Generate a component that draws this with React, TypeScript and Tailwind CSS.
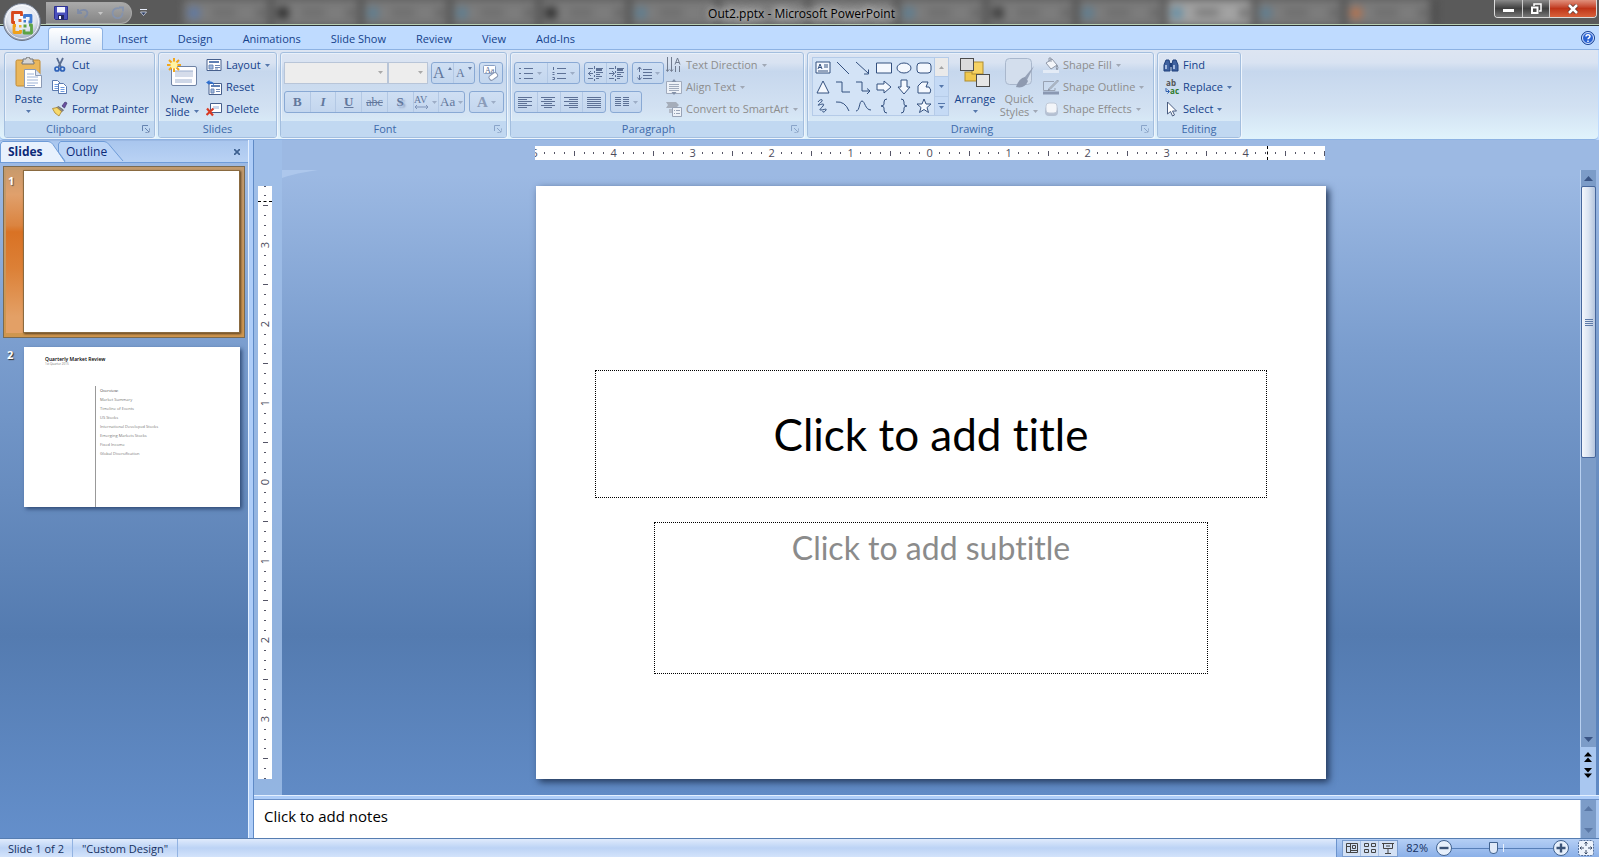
import React from 'react';

type IconProps = { children: React.ReactNode; size?: string; box?: string };

const Icon: React.FC<IconProps> = ({ children, size = 'w-4 h-4', box = '0 0 16 16' }) => (
  <svg viewBox={box} className={`${size} shrink-0`} fill="none" aria-hidden="true">
    {children}
  </svg>
);

const Caret: React.FC<{ className?: string }> = ({ className = 'text-[#5577ab]' }) => (
  <svg viewBox="0 0 5 3" className={`w-[5px] h-[3px] shrink-0 ${className}`} aria-hidden="true">
    <path d="M0 0h5L2.5 3z" fill="currentColor" />
  </svg>
);

/* ---------- title bar ---------- */

const browserTabs = [
  'bg-[#5b78a8]', 'bg-[#222]', 'bg-[#5b7d92]', 'bg-[#5b7d92]', 'bg-[#222]', 'bg-[#5b7d92]', 'bg-[#777]',
  'bg-[#777]', 'bg-[#5b7d92]', 'bg-[#333]', 'bg-[#5b7d92]', 'bg-[#5f8da5]', 'bg-[#5b7d92]', 'bg-[#b9714a]',
];

const OfficeOrb = () => (
  <svg viewBox="0 0 40 40" className="w-10 h-10" aria-hidden="true">
    <defs>
      <radialGradient id="orb" cx="50%" cy="35%" r="65%">
        <stop offset="0" stopColor="#ffffff" />
        <stop offset="0.6" stopColor="#dfe4ee" />
        <stop offset="1" stopColor="#8e9bb5" />
      </radialGradient>
    </defs>
    <circle cx="20" cy="20" r="18.5" fill="url(#orb)" stroke="#6b7483" />
    <circle cx="20" cy="20" r="16.5" fill="none" stroke="#fff" strokeOpacity=".8" />
    <g fill="none" strokeWidth="2.8" strokeLinejoin="round">
      <path d="M13 20.500h-2.500V10.500H19.500V14" stroke="#d8481c" />
      <path d="M22.500 16.500v-3H29V20H26.500" stroke="#3f79d0" />
      <path d="M14 23.500h-2V30.500H18.500V28" stroke="#f0a11c" />
      <path d="M22 27.500v3.500H29.500V23H27" stroke="#5da345" />
    </g>
    <rect x="16.500" y="17" width="3" height="3" fill="#e2703a" />
    <rect x="21.500" y="18" width="2.500" height="2.500" fill="#3f79d0" />
    <rect x="17" y="23" width="2.500" height="2.500" fill="#f3b52e" />
    <rect x="21.500" y="22.500" width="3" height="3" fill="#5da345" />
  </svg>
);

const TitleBar = () => (
  <header className="relative h-[26px] bg-[#5a5a5a] border-b border-[#2c3338] flex items-start">
    <div className="absolute inset-0 overflow-hidden">
      <div className="flex h-full pl-[184px] pr-[164px] blur-[4px]">
        {browserTabs.map((c, i) => (
          <div key={i} className={`flex-1 flex items-center gap-3 px-1 border-r-4 border-[#3a3a3a] ${i === 11 ? 'bg-[#a2a2a2]' : 'bg-[#7c7c7c]'}`}>
            <span className={`w-3 h-3 rounded-full ${c}`} />
            <span className="w-6 h-[5px] bg-[#666]" />
            <span className="w-2 h-2 bg-[#606060] ml-auto" />
          </div>
        ))}
      </div>
      <div className="absolute inset-x-0 bottom-0 h-px bg-[#b9cfb4]" />
    </div>
    <div className="relative w-[86px] h-[22px] mt-[2px] ml-[46px] pl-2 rounded-r-full border border-l-0 border-[#a8a8a8] bg-gradient-to-b from-[#a9a9a9] to-[#858585] flex items-center gap-2">
      <button aria-label="Save">
        <Icon size="w-[14px] h-[14px]" box="0 0 14 14">
          <path d="M.5.500h13v13h-12l-1-1z" fill="#4a50bd" stroke="#2c3190" />
          <path d="M3 1h8v5.500H3z" fill="#f3f5ff" />
          <path d="M4 9h6v4.500H4z" fill="#23275f" />
          <path d="M5 10h2v3H5z" fill="#fff" />
        </Icon>
      </button>
      <button aria-label="Undo" disabled>
        <Icon size="w-[14px] h-[14px]" box="0 0 14 14">
          <path d="M2 3v4h4M2.500 6.500C5 3 11 3 11.500 7c0 2-1 3-3 4.500" stroke="#7e8ba6" strokeWidth="1.800" />
        </Icon>
      </button>
      <Caret className="text-[#c6c6c6]" />
      <button aria-label="Redo" disabled>
        <Icon size="w-[14px] h-[14px]" box="0 0 14 14">
          <path d="M11.500 6.500a5 5 0 1 1-3-4M8 1.500h4v4" stroke="#8593ad" strokeWidth="1.800" />
        </Icon>
      </button>
    </div>
    <button aria-label="Customize" className="relative mt-[9px] ml-2">
      <Icon size="w-[7px] h-[7px]" box="0 0 7 7">
        <path d="M0 .500h7" stroke="#e8eefc" />
        <path d="M.500 3h6L3.500 6.500z" fill="#2c3c60" stroke="#e8eefc" strokeWidth=".7" />
      </Icon>
    </button>
    <h1 className="relative flex-1 text-center text-[12px] leading-[28px] pl-4 text-black [text-shadow:0_0_6px_#ddd,0_0_10px_#ccc,0_0_14px_#ccc]">
      Out2.pptx - Microsoft PowerPoint
    </h1>
    <div className="relative flex h-[18px] mr-[2px] ml-[54px] rounded-b border border-t-0 border-[#dcdcdc] overflow-hidden">
      <button aria-label="Minimize" className="w-7 flex items-center justify-center bg-gradient-to-b from-[#8a8a8a] via-[#3f3f3f] to-[#777] border-r border-[#ccc]">
        <span className="w-[11px] h-[3px] bg-white mt-1" />
      </button>
      <button aria-label="Restore" className="w-[27px] flex items-center justify-center bg-gradient-to-b from-[#8a8a8a] via-[#3f3f3f] to-[#777] border-r border-[#ccc]">
        <Icon size="w-3 h-3" box="0 0 12 12">
          <path d="M4 3V1h7v7H9" stroke="#fff" strokeWidth="1.500" />
          <path d="M2 4.500h5.500V10H2z" stroke="#fff" strokeWidth="2" />
        </Icon>
      </button>
      <button aria-label="Close" className="w-[46px] flex items-center justify-center bg-gradient-to-b from-[#e0907c] via-[#bf3418] to-[#d9603a]">
        <Icon size="w-3 h-[10px]" box="0 0 12 10">
          <path d="M2 1l8 8M10 1L2 9" stroke="#54302a" strokeWidth="4" />
          <path d="M2 1l8 8M10 1L2 9" stroke="#fff" strokeWidth="2.600" />
        </Icon>
      </button>
    </div>
    <button aria-label="Office Button" className="absolute left-[2px] top-[2px] z-10">
      <OfficeOrb />
    </button>
  </header>
);

/* ---------- ribbon ---------- */

const ribbonTabs = ['Insert', 'Design', 'Animations', 'Slide Show', 'Review', 'View', 'Add-Ins'];

const RibbonTabs = () => (
  <nav className="flex items-end h-6 pl-12 pr-1 bg-[#bfdbff] border-b border-[#8db2e3] text-[11px] text-[#15428b]">
    <button className="h-[23px] px-[11px] pt-[2px] -mb-px rounded-t border border-b-0 border-[#8db2e3] bg-gradient-to-b from-white to-[#dde8f6]">Home</button>
    {ribbonTabs.map((t) => (
      <button key={t} className="h-[22px] px-[15px] pt-[2px]">{t}</button>
    ))}
    <button aria-label="Help" className="ml-auto self-center">
      <Icon size="w-[14px] h-[14px]" box="0 0 14 14">
        <circle cx="7" cy="7" r="6.500" fill="#2a62d2" stroke="#1e448f" />
        <circle cx="7" cy="7" r="5.500" stroke="#d7e6ff" />
        <path d="M5 5.500c0-2.500 4-2.500 4 0 0 1.300-2 1.300-2 2.800M7 9.500V11" stroke="#fff" strokeWidth="1.500" />
      </Icon>
    </button>
  </nav>
);

const Launcher: React.FC<{ dim?: boolean }> = ({ dim }) => (
  <button aria-label="More options" className={`absolute right-1 top-1 ${dim ? 'opacity-60' : ''}`}>
    <Icon size="w-2 h-2" box="0 0 8 8">
      <path d="M.500 6V.500H6" stroke="#6583b0" />
      <path d="M3 3l4 4M7.500 3.500v4h-4" stroke="#6583b0" />
      <path d="M8 4.500V8H4.500" stroke="#fff" strokeOpacity=".6" />
    </Icon>
  </button>
);

const Group: React.FC<{ label: string; width: string; launcher?: boolean; dim?: boolean; children: React.ReactNode }> = ({ label, width, launcher, dim, children }) => (
  <section className={`${width} shrink-0 flex flex-col rounded-[3px] border border-[#a3bede] shadow-[1px_1px_0_#eef5fd,inset_1px_1px_0_#e8f0fa] overflow-hidden`}>
    <div className="flex-1 flex items-start">{children}</div>
    <div className={`relative h-4 bg-[#c1d8f1] text-[11px] leading-4 text-center text-[#3e6aaa] ${launcher ? 'pr-[17px]' : ''}`}>
      {label}
      {launcher && <Launcher dim={dim} />}
    </div>
  </section>
);

const SmallButton: React.FC<{ icon: React.ReactNode; label: string; caret?: boolean; disabled?: boolean }> = ({ icon, label, caret, disabled }) => (
  <button disabled={disabled} className={`flex items-center gap-1 h-[22px] whitespace-nowrap ${disabled ? 'text-[#8d8d8d]' : 'text-[#15428b]'}`}>
    {icon}
    <span>{label}</span>
    {caret && <Caret className={disabled ? 'text-[#a0a8b5]' : 'text-[#5577ab]'} />}
  </button>
);

const page = (x: number, y: number) => (
  <>
    <path d={`M${x} ${y}h5l3 3v7h-8z`} fill="#fff" stroke="#5a79ae" />
    <path d={`M${x + 2} ${y + 4}h4M${x + 2} ${y + 6}h4M${x + 2} ${y + 8}h4`} stroke="#6e9be0" />
  </>
);

const Clipboard = () => (
  <Group label="Clipboard" width="w-[151px]" launcher>
    <button className="w-[47px] pt-1 flex flex-col items-center">
      <Icon size="w-7 h-8" box="0 0 28 32">
        <rect x="1" y="3" width="24" height="26" rx="1.500" fill="#eab75c" stroke="#c08a35" />
        <path d="M8 5V2h3a2 2 0 0 1 4 0h3v3h1v2H7V5z" fill="#d5d5d5" stroke="#777" />
        <path d="M9.500 12.500h11l6 6v12h-17z" fill="#fff" stroke="#8b9ab5" />
        <path d="M20.500 12.500v6h6" fill="#dbe3f0" stroke="#8b9ab5" />
        <path d="M12 17h7M12 20h11M12 23h11M12 26h11M12 28.500h8" stroke="#9db2d6" />
      </Icon>
      <span className="leading-[18px] pt-px">Paste</span>
      <span className="pt-[2px]"><Caret /></span>
    </button>
    <div className="flex flex-col pt-px">
      <SmallButton label="Cut" icon={
        <Icon><path d="M5 1l4 9M11 1L6.500 10" stroke="#5a6d90" strokeWidth="1.800" /><circle cx="5" cy="12" r="2" stroke="#2f62b8" strokeWidth="1.700" /><circle cx="10.500" cy="12" r="2" stroke="#2f62b8" strokeWidth="1.700" /></Icon>} />
      <SmallButton label="Copy" icon={<Icon>{page(0.5, 1.5)}{page(6.5, 4.5)}</Icon>} />
      <SmallButton label="Format Painter" icon={
        <Icon>
          <path d="M10 5l3-4 2 1-2.500 5z" fill="#6b4fa0" stroke="#40356e" strokeWidth=".7" />
          <path d="M6.500 5.500l5 3.500-2 2-5.500-4z" fill="#8a8a8a" stroke="#555" strokeWidth=".7" />
          <path d="M.500 7.500L5 6.500l4.500 4L7 15 3 12z" fill="#f7d96b" stroke="#a98430" strokeWidth=".8" />
        </Icon>} />
    </div>
  </Group>
);

const Slides = () => (
  <Group label="Slides" width="w-[119px]">
    <button className="w-[46px] pt-1 flex flex-col items-center leading-[13px]">
      <Icon size="w-8 h-8" box="0 0 32 32">
        <rect x="5.500" y="9.500" width="25" height="19" rx="1.500" fill="#fdfdff" stroke="#6f83a5" />
        <path d="M9 14h18v6H9z" fill="#d5dcea" />
        <path d="M9 14h18M9 23h17M9 25h17" stroke="#9eb0cf" />
        <path d="M8 1v14M1 8h14M3 3l10 10M13 3L3 13" stroke="#f2a71b" strokeWidth="2" />
        <circle cx="8" cy="8" r="3.500" fill="#fff3a0" />
      </Icon>
      <span className="pt-[3px]">New</span>
      <span className="flex items-center gap-1">Slide <Caret /></span>
    </button>
    <div className="flex flex-col pt-px pl-px">
      <SmallButton label="Layout" caret icon={
        <Icon><path d="M1 2.500h14v11H1z" fill="#fff" stroke="#465f8c" /><path d="M3 5h10" stroke="#5f7fb2" strokeWidth="2" /><path d="M3 8h4v4H3z" fill="#9fb8de" stroke="#6d88b5" /><path d="M9 8.500h5M9 10.500h5M9 12h3" stroke="#6d88b5" /></Icon>} />
      <SmallButton label="Reset" icon={
        <Icon><path d="M3 4.500h12.500v11H3z" fill="#fff" stroke="#465f8c" /><path d="M5 7h9" stroke="#5f7fb2" strokeWidth="2" /><path d="M5 10h3v4H5z" fill="#9fb8de" stroke="#6d88b5" /><path d="M10 10.500h4M10 12.500h4" stroke="#6d88b5" /><path d="M3.500 1L0 3.500 3.500 6V4.500c3 0 4 0 4 3 1.500-3.500-.5-5-4-5z" fill="#2f70cf" /></Icon>} />
      <SmallButton label="Delete" icon={
        <Icon><path d="M4.500 2.500h11v9h-11z" fill="#fff" stroke="#465f8c" /><path d="M7 5h6v3H7z" fill="#c9d6ec" /><path d="M1 7.500l6 7M7.500 7.500L.500 14" stroke="#d83a24" strokeWidth="2.200" /></Icon>} />
    </div>
  </Group>
);

const Strip: React.FC<{ width: string; children: React.ReactNode }> = ({ width, children }) => (
  <div className={`${width} h-[22px] flex items-center justify-around rounded-[3px] border border-[#89a9d4] bg-gradient-to-b from-[#cfdff3] to-[#c3d6ee] text-[#62779c] divide-x divide-[#b3c8e4]`}>
    {children}
  </div>
);

const Cell: React.FC<{ name: string; caret?: boolean; children: React.ReactNode }> = ({ name, caret, children }) => (
  <button disabled aria-label={name} className="flex-1 h-full flex items-center justify-center gap-[3px]">
    {children}
    {caret && <Caret className="text-[#9dadc6]" />}
  </button>
);

const serif = "font-['Liberation_Serif',serif] font-bold";

const FontGroup = () => (
  <Group label="Font" width="w-[227px]" launcher dim>
    <div className="flex flex-col gap-[7px] pt-[9px] pl-[3px]">
      <div className="flex h-[22px]">
        {[['Font', 'w-[104px]'], ['Font Size', 'w-10']].map(([name, w]) => (
          <div key={name} className={`${w} relative`}>
            <select disabled aria-label={name} className="w-full h-full appearance-none bg-[#ededed] border border-[#b8c5d8] opacity-100">
              <option></option>
            </select>
            <span className="absolute right-[5px] top-[9px] flex"><Caret className="text-[#a9a9a9]" /></span>
          </div>
        ))}
        <div className="flex gap-1 pl-[3px]">
          <Strip width="w-11">
            <Cell name="Grow Font">
              <span className="font-['Liberation_Serif',serif] text-[16px]">A</span>
              <Icon size="w-1 h-3" box="0 0 4 12"><path d="M0 3h4L2 0z" fill="#62779c" /></Icon>
            </Cell>
            <Cell name="Shrink Font">
              <span className="font-['Liberation_Serif',serif] text-[12px]">A</span>
              <Icon size="w-1 h-3" box="0 0 4 12"><path d="M0 0h4L2 3z" fill="#62779c" /></Icon>
            </Cell>
          </Strip>
          <Strip width="w-6">
            <Cell name="Clear Formatting">
              <Icon>
                <rect x=".500" y=".500" width="12" height="8" rx="1" fill="#fff" stroke="#8aa0c4" />
                <text x="2" y="7.500" fontSize="8" fill="#51658c" fontFamily="Liberation Serif, serif">Aa</text>
                <rect x="5.500" y="9" width="9" height="5" rx="2" transform="rotate(-35 10 11)" fill="#fff" stroke="#8795b0" />
              </Icon>
            </Cell>
          </Strip>
        </div>
      </div>
      <div className="flex gap-1">
        <Strip width="w-[181px]">
          <Cell name="Bold"><span className={`${serif} text-[13px]`}>B</span></Cell>
          <Cell name="Italic"><span className={`${serif} text-[13px] italic`}>I</span></Cell>
          <Cell name="Underline"><span className={`${serif} text-[13px] underline`}>U</span></Cell>
          <Cell name="Strikethrough"><span className="font-['Liberation_Serif',serif] text-[12px] line-through">abc</span></Cell>
          <Cell name="Shadow"><span className={`${serif} text-[13px] [text-shadow:2px_2px_2px_#8a9cc0]`}>S</span></Cell>
          <Cell name="Character Spacing" caret>
            <Icon box="0 0 15 16" size="w-[15px] h-4">
              <text x="0" y="9" fontSize="10" fill="#62779c" fontFamily="Liberation Serif, serif">AV</text>
              <path d="M1 13h13M3 11l-2 2 2 2M12 11l2 2-2 2" stroke="#7f93b8" />
            </Icon>
          </Cell>
          <Cell name="Change Case" caret><span className="font-['Liberation_Serif',serif] text-[13px]">Aa</span></Cell>
        </Strip>
        <Strip width="w-[35px]">
          <Cell name="Font Color" caret><span className={`${serif} text-[15px] text-[#8b9cb9]`}>A</span></Cell>
        </Strip>
      </div>
    </div>
  </Group>
);

const ink = '#5d7196';

const lineIcons: Record<string, string> = {
  left: 'M0 2.500h14M0 4.500h9M0 6.500h14M0 8.500h9M0 10.500h14M0 12.500h9',
  center: 'M0 2.500h14M3 4.500h8M0 6.500h14M3 8.500h8M0 10.500h14M3 12.500h8',
  right: 'M0 2.500h14M5 4.500h9M0 6.500h14M5 8.500h9M0 10.500h14M5 12.500h9',
  justify: 'M0 2.500h14M0 4.500h14M0 6.500h14M0 8.500h14M0 10.500h14M0 12.500h14',
  columns: 'M0 2.500h6M0 4.500h6M0 6.500h6M0 8.500h6M0 10.500h6M8 2.500h6M8 4.500h6M8 6.500h6M8 8.500h6M8 10.500h6',
  bullets: 'M5 2.500h9M5 7.500h9M5 12.500h9M0 2.500h2M0 7.500h2M0 12.500h2',
  numbers: 'M5 2.500h9M5 7.500h9M5 12.500h9M1.500 1v3M.500 6.500h2M.500 8.500h2M.500 11.500h2v2h-2',
  outdent: 'M0 2.500h5M8 2.500h7M8 3.500h6M8 4.500h6M0 7.500h5M3 5L.500 7.500 3 10M8 6.500h7M8 8.500h4M0 12.500h5M8 10.500h6M8 12.500h3M6.500 0v3M6.500 5v2M6.500 9v2M6.500 13v2',
  indent: 'M0 2.500h5M8 2.500h7M8 3.500h6M8 4.500h6M0 7.500h5M3 5l2.500 2.500L3 10M8 6.500h7M8 8.500h4M0 12.500h5M8 10.500h6M8 12.500h3M6.500 0v3M6.500 5v2M6.500 9v2M6.500 13v2',
  spacing: 'M6 3.500h9M6 6.500h9M6 9.500h9M6 12.500h9M2.500 1v5M.500 3.500l2-2.500 2 2.500M2.500 9v5M.500 11.500l2 2.500 2-2.500',
};

const Lines: React.FC<{ kind: string }> = ({ kind }) => (
  <Icon size="w-[15px] h-[15px]" box="0 0 15 15"><path d={lineIcons[kind]} stroke={ink} /></Icon>
);

const Paragraph = () => (
  <Group label="Paragraph" width="w-[294px]" launcher dim>
    <div className="flex flex-col gap-[7px] pt-[9px] pl-[3px]">
      <div className="flex gap-1">
        <Strip width="w-[66px]">
          <Cell name="Bullets" caret><Lines kind="bullets" /></Cell>
          <Cell name="Numbering" caret><Lines kind="numbers" /></Cell>
        </Strip>
        <Strip width="w-[44px]">
          <Cell name="Decrease Indent"><Lines kind="outdent" /></Cell>
          <Cell name="Increase Indent"><Lines kind="indent" /></Cell>
        </Strip>
        <Strip width="w-8">
          <Cell name="Line Spacing" caret><Lines kind="spacing" /></Cell>
        </Strip>
      </div>
      <div className="flex gap-1">
        <Strip width="w-[92px]">
          {['left', 'center', 'right', 'justify'].map((k) => (
            <Cell key={k} name={k}><Lines kind={k} /></Cell>
          ))}
        </Strip>
        <Strip width="w-8">
          <Cell name="Columns" caret><Lines kind="columns" /></Cell>
        </Strip>
      </div>
    </div>
    <div className="flex flex-col pt-px pl-[2px]">
      <SmallButton disabled caret label="Text Direction" icon={
        <Icon><path d="M1.500 0v14M5.500 0v14M9.500 9v6M13.500 9v6M0 12.500l1.500 2 1.500-2M4 12.500l1.500 2 1.500-2" stroke="#707b8e" /><path d="M9 7.500L11.500 1 14 7.500M10 5.500h3" stroke="#707b8e" /></Icon>} />
      <SmallButton disabled caret label="Align Text" icon={
        <Icon><path d="M.500 2.500h15v12H.500z" fill="#eef2f8" stroke="#a1abbd" /><path d="M3 5.500h10M3 7.500h10M3 9.500h10M3 11.500h10" stroke="#a1abbd" /><path d="M5.500 3L8 0l2.500 3zM5.500 13L8 16l2.500-3z" fill="#8290a8" /></Icon>} />
      <SmallButton disabled caret label="Convert to SmartArt" icon={
        <Icon><path d="M0 1h10l3 3-3 3H0l2-3z" fill="#a5adba" /><path d="M3 8h4v4H3z" fill="#b5bcc8" /><path d="M6.500 6.500h9v9h-9z" fill="#eef2f8" stroke="#98a3b6" /><path d="M8 9.500h1M10 9.500h4M8 12.500h1M10 12.500h4" stroke="#98a3b6" /></Icon>} />
    </div>
  </Group>
);

const shapes: { name: string; d: string; fill?: boolean }[] = [
  { name: 'Text Box', d: 'M1 2h14v11H1zM3 9l2-5 2 5M4 7.500h2M9 5h4M9 7h4M3 11h10', fill: true },
  { name: 'Line', d: 'M2 2l12 12' },
  { name: 'Arrow', d: 'M1 2l12 11M13.500 9.500V14H9' },
  { name: 'Rectangle', d: 'M.500 3h15v10H.500z', fill: true },
  { name: 'Oval', d: 'M1 8a7 5 0 1 0 14 0a7 5 0 1 0-14 0', fill: true },
  { name: 'Rounded Rectangle', d: 'M4 3h8q3 0 3 3v4q0 3-3 3H4q-3 0-3-3V6q0-3 3-3z', fill: true },
  { name: 'Triangle', d: 'M8 2l6 12H2z', fill: true },
  { name: 'Elbow', d: 'M1 3h6v10h8' },
  { name: 'Elbow Arrow', d: 'M1 3h6v9h8M12 9.500l3 2.500-3 3' },
  { name: 'Right Arrow', d: 'M1 5h7V2l7 6-7 6v-3H1z', fill: true },
  { name: 'Down Arrow', d: 'M5 1h6v7h3l-6 7-6-7h3z', fill: true },
  { name: 'Freeform', d: 'M2 14V7l4-4h6l-2 5h3q3 3 1 6z', fill: true },
  { name: 'Scribble', d: 'M3 4c2-3 5-3 4-1S1 8 4 7s6-2 4 1-5 4-2 4 6-2 5 0-4 3-3 1' },
  { name: 'Arc', d: 'M1 4q9-1 13 9' },
  { name: 'Curve', d: 'M1 13C5 13 4 3 7 3s3 9 9 9' },
  { name: 'Left Brace', d: 'M11 1q-3 0-3 3v2q0 2-3 2 3 0 3 2v2q0 3 3 3' },
  { name: 'Right Brace', d: 'M5 1q3 0 3 3v2q0 2 3 2-3 0-3 2v2q0 3-3 3' },
  { name: 'Star', d: 'M8 1l2 5h5l-4 3.500 1.500 5L8 11.500l-4.500 3 1.500-5L1 6h5z', fill: true },
];

const Drawing = () => (
  <Group label="Drawing" width="w-[347px]" launcher dim>
    <div className="flex h-[59px] mt-1 ml-1 w-[137px] border border-[#b5cbe8] bg-[#d3e3f6]">
      <div className="flex-1 grid grid-cols-6 place-items-center">
        {shapes.map((s) => (
          <button key={s.name} aria-label={s.name}>
            <Icon><path d={s.d} stroke="#33507f" fill={s.fill ? '#f4f8fe' : 'none'} /></Icon>
          </button>
        ))}
      </div>
      <div className="w-[14px] flex flex-col border-l border-[#b5cbe8] divide-y divide-[#b5cbe8]">
        <button aria-label="Scroll up" className="flex-1 flex items-center justify-center bg-[#eaeaea]"><Icon size="w-[5px] h-[3px]" box="0 0 5 3"><path d="M0 3h5L2.500 0z" fill="#a5a5a5" /></Icon></button>
        <button aria-label="Scroll down" className="flex-1 flex items-center justify-center bg-[#c5daf5]"><Caret /></button>
        <button aria-label="More shapes" className="flex-1 flex flex-col gap-[2px] items-center justify-center bg-[#c5daf5]"><span className="w-[7px] h-px bg-[#5577ab]" /><Caret /></button>
      </div>
    </div>
    <button className="w-[52px] pt-1 flex flex-col items-center">
      <Icon size="w-8 h-8" box="0 0 32 32">
        <rect x="6" y="15" width="12" height="9" fill="#f0c84e" stroke="#b08d2e" />
        <rect x="13" y="5" width="11" height="12" fill="#f5d264" stroke="#b08d2e" />
        <rect x="1.500" y="1.500" width="13" height="12" fill="#dcdcdc" stroke="#4c4c4c" />
        <rect x="17.500" y="17.500" width="13" height="12" fill="#e6e6e6" stroke="#4c4c4c" />
      </Icon>
      <span className="leading-[18px] pt-px">Arrange</span>
      <span className="pt-[2px]"><Caret /></span>
    </button>
    <button disabled className="w-9 pt-1 flex flex-col items-center leading-[13px] text-[#8d8d8d]">
      <Icon size="w-8 h-8" box="0 0 32 32">
        <rect x="2.500" y="1.500" width="26" height="26" rx="4" fill="#d3deed" stroke="#a9b7cc" />
        <path d="M31 9L21 21l3 2z" fill="#96a2b8" />
        <path d="M22 20q-6 1-9 10 9 2 12-6z" fill="#8e9ab0" />
      </Icon>
      <span className="pt-[3px]">Quick</span>
      <span className="flex items-center gap-1">Styles <Caret className="text-[#a0a8b5]" /></span>
    </button>
    <div className="flex flex-col pt-px pl-[6px]">
      <SmallButton disabled caret label="Shape Fill" icon={
        <Icon><path d="M3 6l6-4 5 6-6 4z" fill="#f4f6fa" stroke="#8f98a8" /><path d="M8 5V1H6v4M14 8q2 3 0 5-1.500-2 0-5" stroke="#8f98a8" /><path d="M0 13h16v3H0z" fill="#e3ebf6" /></Icon>} />
      <SmallButton disabled caret label="Shape Outline" icon={
        <Icon><path d="M11 2.500H.500v9H12V9" stroke="#98a2b3" /><path d="M14.500 1L6 9.500l-1 2 2-1L15.500 2z" fill="#c4ccd9" stroke="#7d8797" strokeWidth=".7" /><path d="M0 12.500h16v3H0z" fill="#8a98b2" /></Icon>} />
      <SmallButton disabled caret label="Shape Effects" icon={
        <Icon><rect x="2" y="5" width="13" height="10" rx="4" fill="#b4c0d2" /><rect x="3" y="2" width="11" height="10" rx="3" fill="#f3f5f9" stroke="#c1cad8" /></Icon>} />
    </div>
  </Group>
);

const Editing = () => (
  <Group label="Editing" width="w-[84px]">
    <div className="flex flex-col pt-px pl-[5px]">
      <SmallButton label="Find" icon={
        <Icon><path d="M3 3h3l1 4v7H1V8zM10 3h3l2 5v6H9V7z" fill="#3f62a0" stroke="#1f3f7a" /><path d="M7 6h2v4H7z" fill="#1f3f7a" /><path d="M3 8v4M11 8v4" stroke="#c7d8f4" strokeWidth="1.500" /></Icon>} />
      <SmallButton label="Replace" caret icon={
        <span className="w-4 h-4 flex flex-col text-[8px] leading-[8px] font-bold">
          <span className="text-[#555]">ab</span>
          <span className="flex items-center justify-end text-[#2c7a2c]">
            <Icon size="w-[5px] h-[6px]" box="0 0 5 6"><path d="M1 0v3.500h3M2.500 1.500l2 2-2 2" stroke="#2f5fae" /></Icon>
            ac
          </span>
        </span>} />
      <SmallButton label="Select" caret icon={
        <Icon><path d="M4.500 1v12l3-2.500 2 4.500 2-1-2-4h4z" fill="#fff" stroke="#4a5d80" /></Icon>} />
    </div>
  </Group>
);

const Ribbon = () => (
  <div className="h-[90px] flex gap-[3px] pl-1 pt-[2px] pb-px mr-[1px] rounded-b border-b border-[#8db2e3] bg-[linear-gradient(#dde5f2_0%,#d9e3f2_14%,#c6d7ed_24%,#d2e1f2_65%,#e0f3fc_100%)] text-[11px] text-[#15428b] overflow-hidden">
    <Clipboard />
    <Slides />
    <FontGroup />
    <Paragraph />
    <Drawing />
    <Editing />
  </div>
);

/* ---------- slide pane ---------- */

const agenda = [
  'Market Summary', 'Timeline of Events', 'US Stocks', 'International Developed Stocks',
  'Emerging Markets Stocks', 'Fixed Income', 'Global Diversification',
];

const SlidePane = () => (
  <aside className="w-[248px] shrink-0 flex flex-col">
    <div className="flex items-start h-[22px] mt-[1px] pr-2 border-b border-[#6f9cd8] bg-gradient-to-b from-[#a9c6ee] to-[#b9d2f4] text-[12px] text-[#0c2a78]">
      <button className="relative w-[58px] h-[21px] font-bold text-left pl-2">
        <svg viewBox="0 0 66 21" className="absolute left-0 top-0 w-[66px] h-[21px]" aria-hidden="true">
          <path d="M.500 21V3l2-2.500H48q3 0 5 3L65 21" fill="#e8f1fd" stroke="#6f9cd8" />
        </svg>
        <span className="relative">Slides</span>
      </button>
      <button className="relative w-[66px] h-[21px] text-left pl-2">
        <svg viewBox="0 0 66 21" className="absolute left-0 top-0 w-[66px] h-[21px]" aria-hidden="true">
          <path d="M7 20L.500 11V3l2-2.500H46q3 0 5 3L65 20" fill="#bcd5f7" stroke="#6f9cd8" />
        </svg>
        <span className="relative">Outline</span>
      </button>
      <button aria-label="Close pane" className="ml-auto self-center">
        <Icon size="w-[6px] h-[6px]" box="0 0 6 6"><path d="M0 0l6 6M6 0L0 6" stroke="#3d6090" strokeWidth="1.700" /></Icon>
      </button>
    </div>
    <div className="flex flex-col gap-[5px] pt-[3px] px-[3px]">
      <div className="flex border border-[#7a6a50] bg-gradient-to-b from-[#c19a6e] to-[#cf964e] p-1 pt-[3px] pl-[2px]">
        <div className="w-[17px] shrink-0 pl-[2px] pt-[3px] text-white text-[11px] font-bold bg-[linear-gradient(#c99a6c_0%,#e0a06c_15%,#db8440_34%,#d97224_38%,#dc8036_60%,#e3a066_90%)] [text-shadow:1px_1px_1px_#555]">1</div>
        <div className="flex-1 aspect-[4/3] bg-white border border-[#8a6a40] shadow-[1px_1px_2px_#5a4020]" />
      </div>
      <div className="flex pl-1 pr-[5px] pt-[4px]">
        <div className="w-[17px] shrink-0 text-white text-[11px] font-bold [text-shadow:1px_1px_1px_#333]">2</div>
        <div className="flex-1 h-40 flex flex-col bg-white shadow-[2px_2px_4px_#2f4a75] text-[#777]">
          <div className="pl-[21px] pt-[9px] text-[5px] leading-[6px] font-semibold text-black">Quarterly Market Review</div>
          <div className="pl-[21px] text-[3px] leading-[4px]">1st Quarter 2015</div>
          <ul className="flex-1 ml-[71px] mt-[20px] pl-1 border-l border-[#999] text-[4px] leading-[9px]">
            <li className="text-[#444]">Overview:</li>
            {agenda.map((a) => <li key={a}>{a}</li>)}
          </ul>
        </div>
      </div>
    </div>
  </aside>
);

/* ---------- editor ---------- */

const Ruler: React.FC<{ from: number; to: number; vertical?: boolean; marker: string }> = ({ from, to, vertical, marker }) => {
  const ticks: number[] = [];
  for (let v = from; v <= to; v += 0.125) ticks.push(v);
  return (
    <div className={`relative overflow-hidden bg-white flex justify-between items-center text-[#4b4b5c] text-[11px] leading-[14px] ${vertical ? 'flex-col h-full w-[14px]' : 'w-full h-[14px]'}`}>
      {ticks.map((v) => {
        const whole = Number.isInteger(v) && v < 5;
        const half = Number.isInteger(v * 2);
        const long = vertical ? 'w-[5px] h-px' : 'w-px h-[5px]';
        const short = vertical ? 'w-[2px] h-px' : 'w-px h-[2px]';
        return (
          <span key={v} className={`flex items-center justify-center ${vertical ? 'h-0' : 'w-0'}`}>
            {whole
              ? <span className={vertical ? '-rotate-90' : ''}>{Math.abs(v)}</span>
              : <span className={`shrink-0 bg-[#555566] ${half ? long : short}`} />}
          </span>
        );
      })}
      <span className={`absolute border-dashed border-black ${marker}`} />
    </div>
  );
};

const ScrollArrow: React.FC<{ up?: boolean; dim?: boolean }> = ({ up, dim }) => (
  <button aria-label={up ? 'Scroll up' : 'Scroll down'} className={`h-4 w-full flex items-center justify-center ${dim ? 'opacity-50' : ''}`}>
    <Icon size="w-[9px] h-[5px]" box="0 0 9 5"><path d={up ? 'M0 5h9L4.500 0z' : 'M0 0h9L4.500 5z'} fill="#3a5585" /></Icon>
  </button>
);

const Jump: React.FC<{ up?: boolean }> = ({ up }) => (
  <button aria-label={up ? 'Previous Slide' : 'Next Slide'} className="h-4 w-full flex items-center justify-center">
    <Icon size="w-2 h-[10px]" box="0 0 8 10">
      <path d={up ? 'M0 4.500h8L4 0zM0 10h8L4 5.500z' : 'M0 0h8L4 4.500zM0 5.500h8L4 10z'} fill="#000" />
    </Icon>
  </button>
);

const Editor = () => (
  <main className="flex-1 min-w-0 flex flex-col border-l border-[#5f8ac6]">
    <div className="flex-1 min-h-0 flex">
      <div className="w-7 shrink-0 flex pt-[46px] pb-4 pl-1 bg-[#a0bfe9]/80">
        <Ruler vertical from={-3.75} to={3.75} marker="inset-x-0 top-[15px] border-t" />
      </div>
      <div className="flex-1 min-w-0 flex flex-col">
        <div className="h-[30px] shrink-0 pt-[6px] pr-[2px] flex justify-center">
          <div className="w-[61%]"><Ruler from={-5} to={5} marker="inset-y-0 left-[92.6%] border-l" /></div>
        </div>
        <div className="relative flex-1 min-h-0 py-4 flex justify-center">
          <svg viewBox="0 0 36 8" className="absolute left-0 top-0 w-9 h-2" aria-hidden="true">
            <path d="M0 0h36Q14 3 0 8z" fill="#adc7ec" />
          </svg>
          <div className="h-full aspect-[4/3] bg-white shadow-[3px_3px_7px_#23385a] flex flex-col items-center font-[Lato,sans-serif] [font-variant-ligatures:none]">
            <div className="w-[85%] h-[21.600%] mt-[23.300%] border border-dotted border-black flex items-center justify-center text-[44px] text-black">
              Click to add title
            </div>
            <div className="w-[70%] h-[25.500%] mt-6 pt-1 border border-dotted border-black text-center text-[32px] leading-[42px] text-[#8b8b8b]">
              Click to add subtitle
            </div>
          </div>
        </div>
      </div>
      <div className="w-[19px] shrink-0 flex flex-col pt-[30px] pr-[3px]">
        <div className="flex-1 flex flex-col bg-[#7c9cc8] border-l border-[#b8d0f0]">
          <ScrollArrow up />
          <div className="h-[272px] flex flex-col gap-px items-center justify-center rounded-[2px] border border-[#47679c] bg-gradient-to-r from-[#f4f7fc] via-[#dbe4f1] to-[#b4c5de]">
            {[0, 1, 2, 3].map((n) => <span key={n} className="w-2 h-px bg-[#5e7aa8]" />)}
          </div>
          <div className="flex-1" />
          <ScrollArrow />
        </div>
        <div className="h-12 flex flex-col pt-[2px] bg-[#a9c7f0]">
          <Jump up />
          <Jump />
        </div>
      </div>
    </div>
    <div className="h-[5px] shrink-0 bg-[#aecdf8] border-t border-[#e4f0ff] border-b border-b-[#6a90c8]" />
    <div className="h-[38px] shrink-0 flex bg-white">
      <textarea aria-label="Notes" defaultValue="Click to add notes" className="flex-1 resize-none overflow-hidden outline-none pl-[10px] pt-[6px] text-[15px] leading-5 text-black" />
      <div className="w-[19px] pr-[3px] bg-[#a9c7f0]">
        <div className="h-full flex flex-col justify-between bg-[#7c9cc8] border-l border-[#b8d0f0]">
          <ScrollArrow up dim />
          <ScrollArrow dim />
        </div>
      </div>
    </div>
  </main>
);

/* ---------- status bar ---------- */

const ZoomButton: React.FC<{ plus?: boolean }> = ({ plus }) => (
  <button aria-label={plus ? 'Zoom in' : 'Zoom out'}>
    <Icon><circle cx="8" cy="8" r="7.500" fill="#e6effb" stroke="#41628f" /><path d={plus ? 'M3.500 8h9M8 3.500v9' : 'M3.500 8h9'} stroke="#3b5377" strokeWidth="2.400" /></Icon>
  </button>
);

const StatusBar = () => (
  <footer className="h-[19px] shrink-0 flex border-t border-[#567db1] bg-gradient-to-b from-[#e0ebfc] via-[#bcd3f5] to-[#d3e3fb] text-[11px] leading-5 text-[#15305f]">
    <span className="px-2 border-r border-[#92b3e2]">Slide 1 of 2</span>
    <span className="px-[9px] border-r border-[#92b3e2]">"Custom Design"</span>
    <div className="flex-1 border-r border-[#6b93cd]" />
    <div className="flex items-center pl-[5px] pr-[5px] bg-gradient-to-b from-[#b5cff5] to-[#8bb0e8]">
      <div className="flex h-[17px] border border-[#7a9dd0] bg-[#d3e1f5] divide-x divide-[#a9c1e4]">
        <button aria-label="Normal" className="w-[18px] flex items-center justify-center"><Icon size="w-3 h-3" box="0 0 12 12"><path d="M.500 1.500h11v9H.500zM4.500 1.500v9M6.500 3.500h3v3h-3zM4.500 8.500h7M1 4.500h3" stroke="#444" /></Icon></button>
        <button aria-label="Slide Sorter" className="w-[18px] flex items-center justify-center"><Icon size="w-3 h-3" box="0 0 12 12"><path d="M.500 1.500h4v3h-4zM7.500 1.500h4v3h-4zM.500 7.500h4v3h-4zM7.500 7.500h4v3h-4z" stroke="#444" /></Icon></button>
        <button aria-label="Slide Show" className="w-[18px] flex items-center justify-center"><Icon size="w-3 h-3" box="0 0 12 12"><path d="M0 1.500h12M1.500 2v4.500h9V2M6 7v4M3 11.500h6M4 4h4" stroke="#444" /></Icon></button>
      </div>
      <button className="px-2">82%</button>
      <ZoomButton />
      <div className="relative w-[101px] h-4 flex items-center">
        <span className="absolute inset-x-0 top-2 h-px bg-[#587fb8]" />
        <span className="absolute left-[51px] top-1 h-2 w-px bg-[#e9f1fd]" />
        <input type="range" aria-label="Zoom" min="10" max="190" defaultValue="82" className="relative w-full h-4 appearance-none bg-transparent [&::-webkit-slider-thumb]:appearance-none [&::-webkit-slider-thumb]:w-[9px] [&::-webkit-slider-thumb]:h-3 [&::-webkit-slider-thumb]:rounded-b-[4px] [&::-webkit-slider-thumb]:border [&::-webkit-slider-thumb]:border-[#41628f] [&::-webkit-slider-thumb]:bg-[#dfe9f8]" />
      </div>
      <ZoomButton plus />
      <button aria-label="Fit to window" className="ml-[9px]">
        <Icon><rect x=".500" y=".500" width="15" height="15" rx="2" fill="#edf3fc" stroke="#54709c" strokeDasharray="2 1" /><path d="M8 2v4M8 10v4M2 8h4M10 8h4M6.500 3.500L8 2l1.500 1.500M6.500 12.500L8 14l1.500-1.500M3.500 6.500L2 8l1.500 1.500M12.500 6.500L14 8l-1.500 1.500" stroke="#3a4a66" /></Icon>
      </button>
    </div>
  </footer>
);

const App: React.FC = () => (
  <div className="h-screen flex flex-col overflow-hidden bg-[#bfdbff] font-['Open_Sans','Noto_Sans',sans-serif]">
    <TitleBar />
    <RibbonTabs />
    <Ribbon />
    <div className="flex-1 min-h-0 flex bg-[linear-gradient(#9cb9e3_0%,#9cb9e3_5%,#7a9dce_30%,#547bb0_71%,#648fcb_100%)]">
      <SlidePane />
      <div className="w-[5px] shrink-0 bg-[#aecdf8] border-l border-[#e4f0ff]" />
      <Editor />
    </div>
    <StatusBar />
  </div>
);

export default App;
